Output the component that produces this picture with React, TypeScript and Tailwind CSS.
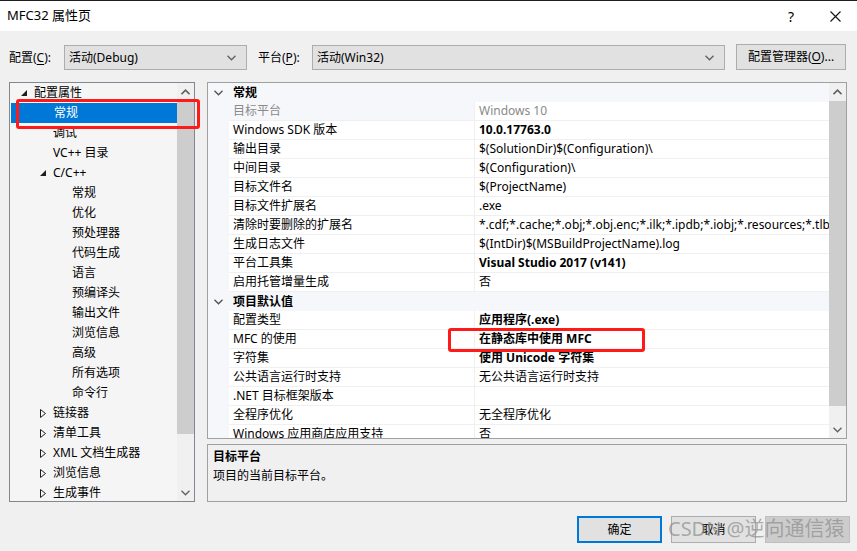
import React from 'react'

type TreeItem = {
  label: string
  level: number
  expander?: 'open' | 'closed'
  selected?: boolean
}

type PropRow = {
  name?: string
  value?: string
  header?: string
  bold?: boolean
  disabled?: boolean
}

const treeItems: TreeItem[] = [
  { label: '配置属性', level: 0, expander: 'open' },
  { label: '常规', level: 1, selected: true },
  { label: '调试', level: 1 },
  { label: 'VC++ 目录', level: 1 },
  { label: 'C/C++', level: 1, expander: 'open' },
  { label: '常规', level: 2 },
  { label: '优化', level: 2 },
  { label: '预处理器', level: 2 },
  { label: '代码生成', level: 2 },
  { label: '语言', level: 2 },
  { label: '预编译头', level: 2 },
  { label: '输出文件', level: 2 },
  { label: '浏览信息', level: 2 },
  { label: '高级', level: 2 },
  { label: '所有选项', level: 2 },
  { label: '命令行', level: 2 },
  { label: '链接器', level: 1, expander: 'closed' },
  { label: '清单工具', level: 1, expander: 'closed' },
  { label: 'XML 文档生成器', level: 1, expander: 'closed' },
  { label: '浏览信息', level: 1, expander: 'closed' },
  { label: '生成事件', level: 1, expander: 'closed' }
]

const propRows: PropRow[] = [
  { header: '常规' },
  { name: '目标平台', value: 'Windows 10', disabled: true },
  { name: 'Windows SDK 版本', value: '10.0.17763.0', bold: true },
  { name: '输出目录', value: '$(SolutionDir)$(Configuration)\\' },
  { name: '中间目录', value: '$(Configuration)\\' },
  { name: '目标文件名', value: '$(ProjectName)' },
  { name: '目标文件扩展名', value: '.exe' },
  {
    name: '清除时要删除的扩展名',
    value: '*.cdf;*.cache;*.obj;*.obj.enc;*.ilk;*.ipdb;*.iobj;*.resources;*.tlb;*.tli;*.tlh;*.tmp'
  },
  { name: '生成日志文件', value: '$(IntDir)$(MSBuildProjectName).log' },
  { name: '平台工具集', value: 'Visual Studio 2017 (v141)', bold: true },
  { name: '启用托管增量生成', value: '否' },
  { header: '项目默认值' },
  { name: '配置类型', value: '应用程序(.exe)', bold: true },
  { name: 'MFC 的使用', value: '在静态库中使用 MFC', bold: true },
  { name: '字符集', value: '使用 Unicode 字符集', bold: true },
  { name: '公共语言运行时支持', value: '无公共语言运行时支持' },
  { name: '.NET 目标框架版本', value: '' },
  { name: '全程序优化', value: '无全程序优化' },
  { name: 'Windows 应用商店应用支持', value: '否' }
]

const font = { fontFamily: '"Noto Sans", "Noto Sans CJK SC", sans-serif' }

const ChevronDown = ({ className = '' }: { className?: string }) => (
  <svg width="9" height="6" viewBox="0 0 9 6" className={className}>
    <path d="M0.5 0.8 L4.5 4.8 L8.5 0.8" fill="none" stroke="currentColor" strokeWidth="1.3" />
  </svg>
)

const ChevronUp = ({ className = '' }: { className?: string }) => (
  <svg width="9" height="6" viewBox="0 0 9 6" className={className}>
    <path d="M0.5 5.2 L4.5 1.2 L8.5 5.2" fill="none" stroke="currentColor" strokeWidth="1.6" />
  </svg>
)

const Expander = ({ kind }: { kind?: 'open' | 'closed' }) => {
  if (kind === 'open') {
    return (
      <svg width="6" height="6" viewBox="0 0 6 6">
        <path d="M6 0 L6 6 L0 6 Z" fill="#1e1e1e" />
      </svg>
    )
  }
  if (kind === 'closed') {
    return (
      <svg width="6" height="9" viewBox="0 0 6 9">
        <path d="M0.5 0.5 L5.5 4.5 L0.5 8.5 Z" fill="none" stroke="#1e1e1e" strokeWidth="1" />
      </svg>
    )
  }
  return null
}

const Underline = ({ children }: { children: string }) => (
  <span className="underline underline-offset-2">{children}</span>
)

const Dropdown = ({ text, width }: { text: string; width: string }) => (
  <div
    className={`${width} mt-px h-[25px] flex items-center justify-between border border-[#adadad] bg-[#e1e1e1] pl-[4px] pr-[10px] text-[12px]`}
  >
    <span>{text}</span>
    <ChevronDown className="text-[#606060]" />
  </div>
)

const Scrollbar = ({ thumbTop, thumbHeight }: { thumbTop: string; thumbHeight: string }) => (
  <div className="w-[17px] h-full bg-[#f0f0f0] flex flex-col">
    <div className="h-[17px] flex items-center justify-center text-[#606060]">
      <ChevronUp />
    </div>
    <div className="flex-1 flex flex-col">
      <div className={`${thumbTop}`} />
      <div className={`${thumbHeight} bg-[#cdcdcd]`} />
    </div>
    <div className="h-[17px] flex items-center justify-center text-[#606060]">
      <ChevronDown />
    </div>
  </div>
)

const Tree = () => (
  <div className="relative w-[186px] h-full border border-[#828790] bg-[#f5f5f5] flex">
    <div className="flex-1 pt-0 overflow-hidden">
      {treeItems.map((item, i) => {
        const indent = item.level === 0 ? 'pl-[11px]' : item.level === 1 ? 'pl-[30px]' : 'pl-[49px]'
        return (
          <div
            key={i}
            className={`h-[20px] flex items-center ${indent} ${
              item.selected ? 'bg-[#0078d7] text-white ml-px' : 'text-black'
            }`}
          >
            <div className="w-[13px] flex items-center">
              <Expander kind={item.expander} />
            </div>
            <span className="text-[12px] leading-none whitespace-nowrap">{item.label}</span>
          </div>
        )
      })}
    </div>
    <Scrollbar thumbTop="h-px" thumbHeight="h-[333px]" />
  </div>
)

const PropertyGrid = () => (
  <div className="w-[640px] h-[357px] border border-[#a0a0a0] bg-white flex">
    <div className="flex-1 overflow-hidden">
      {propRows.map((row, i) =>
        row.header ? (
          <div key={i} className="h-[19px] flex items-center bg-[#f5f7fa]">
            <div className="w-[21px] flex items-center justify-center text-[#505050]">
              <ChevronDown />
            </div>
            <span className="pl-[4px] text-[12px] font-bold leading-none">{row.header}</span>
          </div>
        ) : (
          <div key={i} className="h-[19px] flex">
            <div className="w-[21px] shrink-0 bg-[#f5f7fa]" />
            <div
              className={`w-[245px] shrink-0 flex items-center pl-[4px] border-b border-[#f0f0f0] ${
                row.disabled ? 'bg-[#f5f7fa] text-[#8a8a8a]' : 'text-black'
              }`}
            >
              <span className="text-[12px] leading-none whitespace-nowrap">{row.name}</span>
            </div>
            <div
              className={`flex-1 min-w-0 flex items-center pl-[4px] border-l border-b border-[#f0f0f0] overflow-hidden ${
                row.disabled ? 'text-[#8a8a8a]' : 'text-black'
              }`}
            >
              <span className={`text-[12px] leading-none whitespace-nowrap ${row.bold ? 'font-bold' : ''}`}>
                {row.value}
              </span>
            </div>
          </div>
        )
      )}
    </div>
    <Scrollbar thumbTop="h-px" thumbHeight="h-[305px]" />
  </div>
)

const Button = ({
  children,
  primary,
  disabled,
  width
}: {
  children?: React.ReactNode
  primary?: boolean
  disabled?: boolean
  width: string
}) => (
  <div
    className={`${width} h-[27px] flex items-center justify-center text-[12px] ${
      primary
        ? 'border-2 border-[#0078d7] bg-[#e1e1e1]'
        : disabled
        ? 'border border-[#bfbfbf] bg-[#cccccc] text-[#838383]'
        : 'border border-[#adadad] bg-[#e1e1e1]'
    }`}
  >
    {children}
  </div>
)

export default function App() {
  return (
    <div
      className="relative w-[857px] h-[551px] overflow-hidden bg-[#f0f0f0] border-t border-[#1f1f1f] text-black"
      style={font}
    >
      {/* title bar */}
      <div className="h-[30px] bg-white flex items-center pl-[7px]">
        <span className="text-[13px]">MFC32 属性页</span>
        <div className="flex-1" />
        <span className="text-[14px] mr-[36px]">?</span>
        <svg width="11" height="11" viewBox="0 0 11 11" className="mr-[16px]">
          <path d="M0.5 0.5 L10.5 10.5 M10.5 0.5 L0.5 10.5" stroke="#111" strokeWidth="1.1" />
        </svg>
      </div>

      {/* configuration row */}
      <div className="flex items-start pt-[13px] pl-[9px] text-[12px]">
        <div className="w-[55px] h-[27px] flex items-center">
          配置(<Underline>C</Underline>):
        </div>
        <Dropdown text="活动(Debug)" width="w-[183px]" />
        <div className="w-[54px] h-[27px] flex items-center ml-[11px]">
          平台(<Underline>P</Underline>):
        </div>
        <Dropdown text="活动(Win32)" width="w-[413px]" />
        <div className="ml-[11px] w-[110px] h-[26px] border border-[#adadad] bg-[#e1e1e1] flex items-center justify-center">
          配置管理器(<Underline>O</Underline>)...
        </div>
      </div>

      {/* main area */}
      <div className="mt-[11px] pl-[9px] h-[420px] flex gap-[12px]">
        <Tree />
        <div className="flex flex-col">
          <PropertyGrid />
          <div className="mt-[5px] w-[640px] h-[58px] border border-[#a0a0a0] bg-[#f0f0f0] pl-[5px] pt-[2px]">
            <div className="text-[12px] font-bold leading-[19px]">目标平台</div>
            <div className="text-[12px] leading-[19px]">项目的当前目标平台。</div>
          </div>
        </div>
      </div>

      {/* buttons */}
      <div className="mt-[14px] pr-[7px] flex justify-end gap-[9px]">
        <Button primary width="w-[85px]">
          确定
        </Button>
        <Button width="w-[85px]">取消</Button>
        <Button disabled width="w-[85px]" />
      </div>

      {/* red annotation boxes */}
      <div className="absolute left-[16px] top-[98px] w-[184px] h-[30px] border-[3px] border-[#ff1a1a] rounded-[3px]" />
      <div className="absolute left-[448px] top-[327px] w-[197px] h-[24px] border-[3px] border-[#ff1a1a] rounded-[3px]" />

      {/* watermark */}
      <div className="absolute left-[668px] top-[518px] text-[20px] leading-none text-[#8c8c8c]/70 whitespace-nowrap">
        CSDN @逆向通信猿
      </div>
    </div>
  )
}
